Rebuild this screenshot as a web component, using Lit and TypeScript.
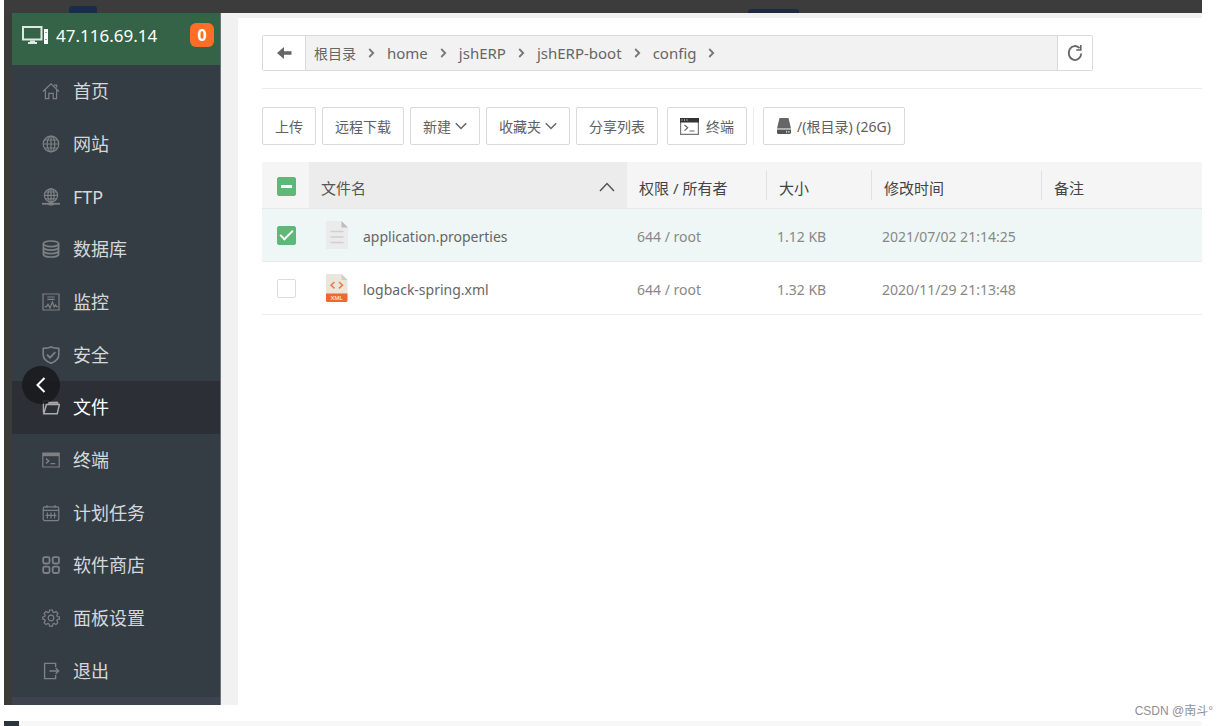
import { LitElement, html, css, svg, nothing } from "lit";
import { customElement, property, state } from "lit/decorators.js";
import { classMap } from "lit/directives/class-map.js";

const glyphs = {
  home: svg`<path d="M1 9.5 9 1.8l8 7.7M3.4 8v8.6h3.4v-5.2h4.4v5.2h3.4V8M12 3.2h2.6v2.4"/>`,
  globe: svg`<circle cx="9" cy="9" r="7.8"/><ellipse cx="9" cy="9" rx="3.8" ry="7.8"/><path d="M9 1.2v15.6M1.2 9h15.6M2.4 5h13.2M2.4 13h13.2"/>`,
  ftp: svg`<circle cx="9" cy="7.4" r="6.6"/><ellipse cx="9" cy="7.4" rx="3.1" ry="6.6"/><path d="M9 .8V14M2.4 7.4h13.2M3.4 4h11.2M3.4 10.8h11.2"/><path d="M0 15.8h18" stroke-width="1.8"/><path d="M6.6 15.8h4.8" stroke-width="3.2"/>`,
  database: svg`<g stroke-width="1.7"><ellipse cx="9" cy="3.8" rx="7.6" ry="2.8"/><path d="M1.4 3.8v10.4c0 1.6 3.4 2.8 7.6 2.8s7.6-1.2 7.6-2.8V3.8M1.4 7.3c0 1.6 3.4 2.8 7.6 2.8s7.6-1.2 7.6-2.8M1.4 10.8c0 1.6 3.4 2.8 7.6 2.8s7.6-1.2 7.6-2.8"/></g>`,
  monitor: svg`<path d="M1 1h16v16H1zM5.4 4h7.2M5.4 6.4h7.2M2.6 13.6h2l1.4-2.4 2 3.8 2.4-6 1.8 5 1.4-2 .8 1.6h1.2"/>`,
  shield: svg`<path d="M9 .9c2.2 1 4.8 1.4 7.8 1.5v6.2c0 4.2-3 7-7.8 8.7-4.8-1.7-7.8-4.5-7.8-8.7V2.4C4.2 2.3 6.8 1.9 9 .9z" stroke-width="1.6"/><path d="m5 8.700 3 3 5.300-5.600" stroke-width="1.8"/>`,
  folder: svg`<path d="M1.400 14.800V2.800h4.800l1.400 1.900h8v2" stroke-width="1.300"/><path d="M4.400 6.600h13L15.200 15.800H1.800z" stroke-width="1.500"/><path d="M6 4.700h10" stroke-width="2"/>`,
  terminal: svg`<path d="M.8 2h16.400v14H.8z"/><path d="M.8 3.600h16.400" stroke-width="3.200"/><path d="m4 7.600 2.800 2.400L4 12.400M8.600 12.600h4.600" stroke-width="1.400"/>`,
  calendar: svg`<rect x="1.200" y="2.800" width="15.600" height="13.800" rx="1.600"/><path d="M1.200 6.400h15.600M5 1v3M13 1v3M5.400 8.400v6M9 8.400v6M12.600 8.400v6M3.600 11.400h10.800" stroke-width="1.100"/>`,
  grid: svg`<g stroke-width="1.800"><rect x="1.200" y="1.200" width="6.300" height="6.300" rx="1.400"/><rect x="10.700" y="1.200" width="6.300" height="6.300" rx="1.400"/><rect x="1.200" y="10.700" width="6.300" height="6.300" rx="1.400"/><rect x="10.700" y="10.700" width="6.300" height="6.300" rx="1.400"/></g>`,
  gear: svg`<path d="M7.600 1h2.800l.5 2.100 1.200.5 1.900-1.100 1.900 1.900-1.100 1.900.5 1.200 2.100.5v2.100l-2.100.5-.5 1.200 1.100 1.900-1.900 1.900-1.900-1.100-1.200.5-.5 2.100H7.600l-.5-2.100-1.200-.5-1.900 1.100-1.900-1.900 1.100-1.900-.5-1.200L.800 10.100V8l1.900-.5.5-1.200-1.100-1.900L4 2.500l1.900 1.100 1.200-.5z"/><circle cx="9" cy="9" r="2.800"/>`,
  exit: svg`<path d="M13.600 5V1.400H2.600v15.200h11V13M7.400 9h9M13.600 6l3 3-3 3" stroke-width="1.400"/>`,
};

type GlyphName = keyof typeof glyphs;

@customElement("line-glyph")
class LineGlyph extends LitElement {
  static styles = css`
    :host { display: block; width: 18px; height: 18px; flex: none; }
    svg { display: block; width: 100%; height: 100%; fill: none; stroke: currentColor; stroke-width: 1.2; }
  `;
  @property() name: GlyphName = "home";
  render() {
    return html`<svg viewBox="0 0 18 18" aria-hidden="true">${glyphs[this.name]}</svg>`;
  }
}

interface MenuEntry { icon: GlyphName; label: string; }

const MENU: MenuEntry[] = [
  { icon: "home", label: "首页" },
  { icon: "globe", label: "网站" },
  { icon: "ftp", label: "FTP" },
  { icon: "database", label: "数据库" },
  { icon: "monitor", label: "监控" },
  { icon: "shield", label: "安全" },
  { icon: "folder", label: "文件" },
  { icon: "terminal", label: "终端" },
  { icon: "calendar", label: "计划任务" },
  { icon: "grid", label: "软件商店" },
  { icon: "gear", label: "面板设置" },
  { icon: "exit", label: "退出" },
];

@customElement("side-menu")
class SideMenu extends LitElement {
  static styles = css`
    :host {
      position: relative;
      display: flex;
      flex-direction: column;
      flex: none;
      width: 208px;
      background: #353d44;
      border-right: 1px solid #6c747b;
    }
    .server {
      display: flex;
      align-items: center;
      height: 52px;
      box-sizing: border-box;
      padding: 0 6px 8px 10px;
      background: #356347;
      color: #fff;
      font-size: 17px;
    }
    .server svg { width: 26px; height: 20px; margin-right: 8px; }
    .badge {
      margin-left: auto;
      width: 24px;
      height: 24px;
      border-radius: 6px;
      background: #ff6d26;
      font-size: 16px;
      font-weight: 700;
      line-height: 24px;
      text-align: center;
    }
    nav { display: flex; flex: 1; flex-direction: column; }
    .foot { height: 8px; background: #3d444f; }
    .entry {
      display: flex;
      flex: 1;
      align-items: center;
      gap: 13px;
      min-height: 40px;
      padding-left: 30px;
      color: #d5d8da;
      font-size: 18px;
      line-height: 24px;
      text-decoration: none;
    }
    .entry line-glyph { color: #7d8184; }
    .entry.on { background: #2c3036; color: #fff; }
    .entry.on line-glyph { color: #a9abad; }
    .collapse {
      position: absolute;
      top: 353px;
      left: 10px;
      display: grid;
      place-items: center;
      width: 38px;
      height: 38px;
      padding: 0;
      border: 0;
      border-radius: 50%;
      background: rgba(24, 25, 27, 0.85);
      color: #fff;
    }
    .collapse svg { width: 16px; height: 18px; fill: none; stroke: currentColor; stroke-width: 2; }
  `;
  @state() private current = "文件";

  render() {
    return html`
      <div class="server">
        <svg viewBox="0 0 26 20" aria-hidden="true">
          <path d="M1 2h18.500v12.500H1z" fill="none" stroke="#dfe8e2" stroke-width="2" />
          <path d="M8 15.500h5v1.500h2v2H6v-2h2z" fill="#dfe8e2" />
          <path d="M22 4h4v15h-4z" fill="#fff" />
          <path d="M23.500 7h1v1h-1zM23.500 14h1v1h-1z" fill="#356347" />
        </svg>
        <span>47.116.69.14</span>
        <span class="badge">0</span>
      </div>
      <nav>
        ${MENU.map(
          (m) => html`<a href="#" class=${classMap({ entry: true, on: m.label === this.current })}
            @click=${(e: Event) => { e.preventDefault(); this.current = m.label; }}
          ><line-glyph name=${m.icon}></line-glyph><span>${m.label}</span></a>`
        )}
      </nav>
      <div class="foot"></div>
      <button class="collapse" aria-label="收起">
        <svg viewBox="0 0 16 18"><path d="M11.500 2 4.500 9l7 7" /></svg>
      </button>
    `;
  }
}

interface FileRow {
  name: string;
  kind: "text" | "xml";
  mode: string;
  size: string;
  time: string;
  picked: boolean;
}

const textFile = html`<svg class="doc" viewBox="0 0 22 28" aria-hidden="true">
  <path d="M0 0h15.500L22 6.500V28H0z" fill="#ebebeb" /><path d="M15.500 0 22 6.500h-6.500z" fill="#bdbdbd" />
  <path d="M4.500 10.500h13M4.500 16h13M4.500 21.500h13" stroke="#cfcfcf" stroke-width="1.400" />
</svg>`;

const xmlFile = html`<svg class="doc" viewBox="0 0 22 28" aria-hidden="true">
  <path d="M1 0h14.500L21.500 6v14H0V1z" fill="#e9e7db" /><path d="M15.500 0 21.500 6h-6z" fill="#d0cebf" />
  <path d="M0 19.500h21.500V27l-1 1H1l-1-1z" fill="#f0672f" />
  <path d="M8.500 8 5 11.200l3.500 3.200M13 8l3.500 3.200-3.500 3.200" fill="none" stroke="#f0774a" stroke-width="1.500" />
  <text x="10.700" y="26.300" font-family="Liberation Sans" font-size="6" fill="#fff" text-anchor="middle">XML</text>
</svg>`;

@customElement("file-table")
class FileTable extends LitElement {
  static styles = css`
    :host { display: block; }
    table { width: 100%; table-layout: fixed; border-collapse: separate; border-spacing: 0; }
    th, td { box-sizing: border-box; text-align: left; white-space: nowrap; }
    th {
      height: 47px;
      padding: 4px 12px 0;
      background: #f5f5f5;
      border-bottom: 1px solid #e8e8e8;
      color: #444;
      font-size: 15px;
      font-weight: 400;
    }
    th.split { background: linear-gradient(#e2e2e2, #e2e2e2) right center / 1px 30px no-repeat #f5f5f5; }
    th.sorted { background: #ececec; color: #555; }
    td { height: 53px; padding: 2px 10px 0; border-bottom: 1px solid #ececec; color: #888; font-size: 14px; }
    tr.on td { background: #eef7f6; border-bottom-color: #e3eeec; }
    th.pick { width: 47px; padding: 3px 0 0 15px; }
    td.pick { padding: 0 0 0 15px; }
    .name { width: 318px; }
    td.name { padding: 0 17px; }
    .mode { width: 140px; }
    .size { width: 105px; }
    .time { width: 170px; }
    .sort {
      display: flex;
      align-items: center;
      justify-content: space-between;
      width: 100%;
      padding: 0;
      border: 0;
      background: none;
      color: inherit;
      font: inherit;
    }
    .sort svg { width: 16px; height: 10px; fill: none; stroke: #555; stroke-width: 1.5; }
    .file { display: flex; align-items: center; gap: 15px; color: #666; text-decoration: none; }
    .file span { padding-top: 2px; }
    .doc { width: 22px; height: 28px; flex: none; }
    input {
      appearance: none;
      display: grid;
      place-items: center;
      width: 19px;
      height: 19px;
      margin: 0;
      border: 1px solid #dcdcdc;
      border-radius: 2px;
      background: #fff;
    }
    input:checked, input:indeterminate { border-color: #5fb878; background: #5fb878; }
    input:checked::before {
      content: "";
      width: 11px;
      height: 5px;
      margin-bottom: 4px;
      border: solid #fff;
      border-width: 0 0 2px 2px;
      transform: rotate(-45deg);
    }
    input:indeterminate::before { content: ""; width: 11px; height: 3px; background: #fff; }
  `;

  @state() private rows: FileRow[] = [
    { name: "application.properties", kind: "text", mode: "644 / root", size: "1.12 KB", time: "2021/07/02 21:14:25", picked: true },
    { name: "logback-spring.xml", kind: "xml", mode: "644 / root", size: "1.32 KB", time: "2020/11/29 21:13:48", picked: false },
  ];

  private pick(row: FileRow, picked: boolean) {
    this.rows = this.rows.map((r) => (r === row ? { ...r, picked } : r));
  }

  private pickAll(picked: boolean) {
    this.rows = this.rows.map((r) => ({ ...r, picked }));
  }

  render() {
    const count = this.rows.filter((r) => r.picked).length;
    return html`<table>
      <thead>
        <tr>
          <th class="pick"><input type="checkbox" aria-label="全选"
            .checked=${count === this.rows.length}
            .indeterminate=${count > 0 && count < this.rows.length}
            @change=${(e: Event) => this.pickAll((e.target as HTMLInputElement).checked)} /></th>
          <th class="name sorted"><button class="sort">文件名<svg viewBox="0 0 16 10" aria-hidden="true"><path d="M1 9l7-7.500L15 9" /></svg></button></th>
          <th class="mode split">权限 / 所有者</th>
          <th class="size split">大小</th>
          <th class="time split">修改时间</th>
          <th>备注</th>
        </tr>
      </thead>
      <tbody>
        ${this.rows.map(
          (r) => html`<tr class=${r.picked ? "on" : nothing}>
            <td class="pick"><input type="checkbox" aria-label=${r.name} .checked=${r.picked}
              @change=${(e: Event) => this.pick(r, (e.target as HTMLInputElement).checked)} /></td>
            <td class="name"><a class="file" href="#">${r.kind === "xml" ? xmlFile : textFile}<span>${r.name}</span></a></td>
            <td>${r.mode}</td>
            <td>${r.size}</td>
            <td>${r.time}</td>
            <td></td>
          </tr>`
        )}
      </tbody>
    </table>`;
  }
}

const PATH = ["根目录", "home", "jshERP", "jshERP-boot", "config"];

@customElement("path-bar")
class PathBar extends LitElement {
  static styles = css`
    :host {
      display: flex;
      height: 36px;
      box-sizing: border-box;
      border: 1px solid #d9d9d9;
      border-radius: 2px;
      background: #f2f2f2;
    }
    button { display: grid; place-items: center; padding: 0; border: 0; background: #fff; color: #666; }
    .back { width: 43px; border-right: 1px solid #d9d9d9; }
    .reload { width: 35px; border-left: 1px solid #d9d9d9; }
    svg { display: block; fill: none; stroke: currentColor; }
    .crumbs { display: flex; flex: 1; align-items: center; gap: 12px; padding-left: 8px; }
    .crumbs a { color: #666; font-size: 15px; text-decoration: none; }
    .crumbs a.root { font-size: 14px; }
    .crumbs svg { width: 7px; height: 10px; flex: none; color: #777; stroke-width: 1.8; }
  `;
  render() {
    return html`
      <button class="back" aria-label="返回"><svg width="15" height="12" viewBox="0 0 15 12"><path d="M0 6l7-6v4.200h7.500v3.600H7V12z" fill="currentColor" stroke="none" /></svg></button>
      <div class="crumbs">
        ${PATH.map(
          (p, i) => html`<a href="#" class=${i ? nothing : "root"}>${p}</a><svg viewBox="0 0 7 10" aria-hidden="true"><path d="M1.200 1l4 4-4 4" /></svg>`
        )}
      </div>
      <button class="reload" aria-label="刷新"><svg width="16" height="18" viewBox="0 0 16 18"><path d="M12.600 4.200A6.300 7 0 1 0 14.300 9.500" stroke-width="1.800" /><path d="M13.800 1v5H9.200" stroke-width="1.600" /></svg></button>
    `;
  }
}

@customElement("tool-bar")
class ToolBar extends LitElement {
  static styles = css`
    :host { display: flex; flex-wrap: wrap; gap: 6px; }
    button {
      display: flex;
      align-items: center;
      height: 38px;
      padding: 0 12px;
      border: 1px solid #d9d9d9;
      border-radius: 2px;
      background: #fff;
      color: #606060;
      font-family: inherit;
      font-size: 14px;
      white-space: nowrap;
    }
    .arrow { width: 12px; height: 8px; margin-left: 4px; fill: none; stroke: #666; stroke-width: 1.5; }
    .shell { margin-left: 3px; }
    .shell .mark { width: 19px; height: 17px; margin-right: 7px; }
    .rule { width: 1px; height: 38px; background: #ececec; }
    .disk { margin-left: 3px; padding: 0 13px; }
    .disk .mark { width: 14px; height: 16px; margin-right: 6px; }
  `;
  render() {
    const arrow = html`<svg class="arrow" viewBox="0 0 12 8" aria-hidden="true"><path d="M.8 1.200 6 6.500l5.200-5.300" /></svg>`;
    return html`
      <button>上传</button>
      <button>远程下载</button>
      <button>新建${arrow}</button>
      <button>收藏夹${arrow}</button>
      <button>分享列表</button>
      <button class="shell"><svg class="mark" viewBox="0 0 19 17" aria-hidden="true">
        <path d="M.6.600h17.800v15.800H.6z" fill="none" stroke="#777" stroke-width="1.200" />
        <path d="M0 0h19v4.500H0z" fill="#333" /><path d="M1.500 1.500h1v1h-1zM4 1.500h1v1H4zM6.500 1.500h1v1h-1z" fill="#fff" />
        <path d="M4.500 7l3.200 2.800-3.200 2.800M9.500 13h5" fill="none" stroke="#666" stroke-width="1.200" /></svg>终端</button>
      <span class="rule"></span>
      <button class="disk"><svg class="mark" viewBox="0 0 14 16" aria-hidden="true">
        <path d="M2.500 0h9L14 10.500H0z" fill="#666" /><path d="M0 11.500h14V15l-1 1H1l-1-1z" fill="#555" /><path d="M9 13.300h1.200v1.200H9zM11.300 13.300h1.200v1.200h-1.200z" fill="#fff" /></svg>/(根目录) (26G)</button>
    `;
  }
}

@customElement("app-root")
class AppRoot extends LitElement {
  static styles = css`
    :host {
      position: relative;
      display: flex;
      flex-direction: column;
      box-sizing: border-box;
      min-height: 100vh;
      padding: 0 26px 0 4px;
      background: #fff;
      font-family: "Noto Sans", "Noto Sans CJK SC", sans-serif;
    }
    .top { display: flex; align-items: flex-end; height: 13px; background: #3b3c3b; }
    .tab { width: 28px; height: 7px; margin-left: 65px; border-radius: 3px 3px 0 0; background: #1a2c4b; }
    .tab.wide { width: 51px; height: 4px; margin-left: 651px; background: #1e2a42; }
    .frame { display: flex; flex: 1; padding-left: 8px; background: #3b3c3a; }
    .work { flex: 1; min-width: 0; padding: 5px 0 0 17px; background: #f1f1f1; display: flex; }
    .panel { flex: 1; min-width: 0; padding: 17px 0 0 24px; background: #fff; }
    path-bar { margin-right: 109px; }
    tool-bar { margin-top: 17px; padding-top: 18px; border-top: 1px solid #ececec; }
    file-table { margin-top: 17px; }
    .next { height: 5px; margin-top: 16px; border-left: 15px solid #2d353c; background: #f7f7f7; }
    .credit {
      position: absolute;
      right: 15px;
      bottom: 6px;
      color: #8f8f8f;
      font-family: "Liberation Sans", "Noto Sans CJK SC", sans-serif;
      font-size: 12px;
      line-height: 18px;
    }
  `;
  render() {
    return html`
      <div class="top"><span class="tab"></span><span class="tab wide"></span></div>
      <div class="frame">
        <side-menu></side-menu>
        <main class="work">
          <div class="panel">
            <path-bar></path-bar>
            <tool-bar></tool-bar>
            <file-table></file-table>
          </div>
        </main>
      </div>
      <div class="next"></div>
      <span class="credit">CSDN @南斗°</span>
    `;
  }
}
